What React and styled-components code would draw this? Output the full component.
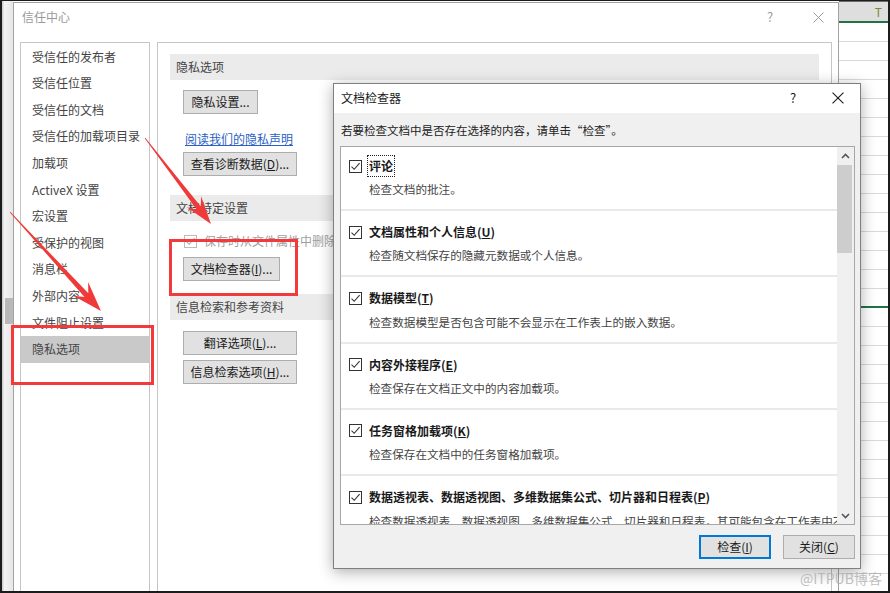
import React from "react"
import styled, { createGlobalStyle, css } from "styled-components"

const GlobalStyle = createGlobalStyle`
  html, body { margin: 0; padding: 0; background: #fff; }
  body { font-family: "Noto Sans CJK SC", "Noto Sans", sans-serif; }
`

const font = css`
  font-family: "Noto Sans CJK SC", "Noto Sans", sans-serif;
`

const Screen = styled.div`
  ${font}
  position: relative;
  width: 890px;
  height: 593px;
  box-sizing: border-box;
  border: 2px solid #1c1c1c;
  border-top-width: 1px;
  overflow: hidden;
  display: flex;
  background: #fff;
  font-size: 12px;
  color: #222;
`

/* ---------- background: spreadsheet edges ---------- */

const LeftStrip = styled.div`
  width: 11px;
  flex-shrink: 0;
  display: flex;
  flex-direction: column;
  background: linear-gradient(to right, #cfcfcf 0, #cfcfcf 1px, #f4f4f4 2px, #e6e6e6 100%);
`

const RowMark = styled.div`
  margin-top: 297px;
  margin-left: 3px;
  height: 26px;
  background: #b9b9b9;
`

const Sheet = styled.div`
  flex: 1;
  display: flex;
  flex-direction: column;
  background: #fff;
`

const Ribbon = styled.div`
  height: 14px;
  background: #f3f3f3;
  border-top: 1px solid #6a6a6a;
  box-sizing: border-box;
`

const ColHeader = styled.div`
  height: 19px;
  background: #dedede;
  border-bottom: 2px solid #217346;
  text-align: right;
  padding-right: 6px;
  line-height: 19px;
  font-size: 12px;
  color: #7a8a2a;
`

const SheetRow = styled.div`
  height: 18px;
  flex-shrink: 0;
  border-bottom: 1px solid ${(p) => (p.$active ? "#217346" : "#dadada")};
  ${(p) => p.$active && "border-bottom-width: 2px; height: 17px;"}
`

/* ---------- outer dialog ---------- */

const OuterDialog = styled.div`
  width: 826px;
  flex-shrink: 0;
  margin-top: 1px;
  box-sizing: border-box;
  border: 1px solid #a3a3a3;
  border-bottom: none;
  background: #fff;
  display: flex;
  flex-direction: column;
`

const TitleBar = styled.div`
  height: ${(p) => p.$h}px;
  flex-shrink: 0;
  display: flex;
  align-items: flex-start;
  padding: 6px 0 0 ${(p) => p.$pl}px;
  box-sizing: border-box;
  line-height: 16px;
  background: #fff;
`

const Title = styled.span`
  font-size: 12px;
  color: ${(p) => (p.$inactive ? "#9a9a9a" : "#1a1a1a")};
  flex: 1;
`

const CtrlBtn = styled.span`
  width: ${(p) => p.$w}px;
  margin-right: ${(p) => p.$mr || 0}px;
  margin-left: ${(p) => p.$ml || 0}px;
  display: flex;
  justify-content: center;
  align-items: center;
  height: 16px;
  font-size: 13px;
  color: ${(p) => (p.$inactive ? "#9a9a9a" : "#1a1a1a")};
`

const OuterBody = styled.div`
  flex: 1;
  display: flex;
  gap: 7px;
  padding: 0 6px;
`

const Nav = styled.div`
  width: 130px;
  flex-shrink: 0;
  box-sizing: border-box;
  border: 1px solid #c6c6c6;
  border-bottom: none;
  padding-top: 0.6px;
`

const NavItem = styled.div`
  height: 26.6px;
  line-height: 26.6px;
  padding-left: 11px;
  font-size: 12px;
  color: #444;
  white-space: nowrap;
  background: ${(p) => (p.$selected ? "#c9c9c9" : "transparent")};
`

const Content = styled.div`
  flex: 1;
  box-sizing: border-box;
  border: 1px solid #c6c6c6;
  border-bottom: none;
  padding: 11px 12px 0 12px;
  display: flex;
  flex-direction: column;
  align-items: flex-start;
`

const SectionHead = styled.div`
  align-self: stretch;
  height: 26px;
  line-height: 26px;
  padding-left: 6px;
  margin-top: ${(p) => p.$mt || 0}px;
  background: #ebebeb;
  color: #444;
  font-size: 12px;
`

const Button = styled.button`
  ${font}
  width: ${(p) => p.$w}px;
  height: 24px;
  margin-top: ${(p) => p.$mt || 0}px;
  margin-left: ${(p) => p.$ml || 0}px;
  padding: 0;
  box-sizing: border-box;
  background: #e1e1e1;
  border: 1px solid ${(p) => (p.$default ? "#0078d7" : "#adadad")};
  box-shadow: ${(p) => (p.$default ? "inset 0 0 0 1px #0078d7" : "none")};
  font-size: 12px;
  color: #1a1a1a;
  line-height: 20px;
  white-space: nowrap;
`

const Link = styled.span`
  margin: 17px 0 0 15px;
  line-height: 16px;
  color: #2b5fc4;
  text-decoration: underline;
  font-size: 12px;
`

const CheckRow = styled.div`
  display: flex;
  align-items: center;
  gap: 7px;
  margin: 12px 0 0 14px;
  line-height: 16px;
  color: ${(p) => (p.$disabled ? "#a0a0a0" : "#222")};
  white-space: nowrap;
`

const Box = styled.span`
  width: 13px;
  height: 13px;
  flex-shrink: 0;
  box-sizing: border-box;
  border: 1px solid ${(p) => (p.$disabled ? "#bcbcbc" : "#333")};
  background: #fff;
  display: flex;
  align-items: center;
  justify-content: center;
`

/* ---------- document inspector dialog ---------- */

const Inspector = styled.div`
  position: absolute;
  left: 331px;
  top: 82px;
  width: 528px;
  height: 486px;
  box-sizing: border-box;
  border: 1px solid #7f7f7f;
  background: #f0f0f0;
  box-shadow: 0 3px 14px rgba(0, 0, 0, 0.32);
  display: flex;
  flex-direction: column;
`

const InspectorBody = styled.div`
  flex: 1;
  display: flex;
  flex-direction: column;
  padding: 0 5px 9px 6px;
`

const Hint = styled.div`
  margin: 9px 0 0 1px;
  line-height: 16px;
  font-size: 11.5px;
  color: #222;
  white-space: nowrap;
`

const ListBox = styled.div`
  margin-top: 8px;
  height: 379px;
  box-sizing: border-box;
  border: 1px solid #a7a7a7;
  background: #fff;
  display: flex;
`

const Items = styled.div`
  flex: 1;
  overflow: hidden;
`

const Item = styled.div`
  height: ${(p) => (p.$first ? 62 : 66.3)}px;
  box-sizing: border-box;
  border-top: ${(p) => (p.$first ? "none" : "2px solid #e9e9e9")};
  padding: ${(p) => (p.$first ? 10 : 12)}px 0 0 8px;
`

const ItemHead = styled.div`
  display: flex;
  align-items: center;
  gap: 7px;
  height: 18px;
`

const ItemTitle = styled.span`
  font-weight: 700;
  font-size: 12px;
  line-height: 18px;
  color: #1a1a1a;
  white-space: nowrap;
  ${(p) =>
    p.$focus &&
    css`
      outline: 1px dotted #222;
      outline-offset: 1px;
    `}
`

const ItemDesc = styled.div`
  margin: 5.4px 0 0 20px;
  line-height: 18px;
  font-size: 11.6px;
  color: #444;
  white-space: nowrap;
`

const ScrollBar = styled.div`
  width: 17px;
  flex-shrink: 0;
  background: #f0f0f0;
  display: flex;
  flex-direction: column;
`

const ScrollArrow = styled.div`
  height: 17px;
  display: flex;
  align-items: center;
  justify-content: center;
  margin-top: ${(p) => (p.$bottom ? "auto" : "0")};
`

const Thumb = styled.div`
  margin: 1px 2px 0 0;
  height: 88px;
  background: #cdcdcd;
`

const Footer = styled.div`
  margin-top: 10px;
  display: flex;
  justify-content: flex-end;
  gap: 12px;
`

/* ---------- annotations ---------- */

const RedBox = styled.div`
  position: absolute;
  box-sizing: border-box;
  border: 3px solid #f23a3a;
`

const Overlay = styled.svg`
  position: absolute;
  left: -2px;
  top: -1px;
  pointer-events: none;
`

const Watermark = styled.div`
  position: absolute;
  left: 798px;
  top: 568px;
  font-size: 14px;
  line-height: 18px;
  color: rgba(170, 170, 170, 0.75);
  white-space: nowrap;
`

const navItems = [
  "受信任的发布者",
  "受信任位置",
  "受信任的文档",
  "受信任的加载项目录",
  "加载项",
  "ActiveX 设置",
  "宏设置",
  "受保护的视图",
  "消息栏",
  "外部内容",
  "文件阻止设置",
  "隐私选项",
]

const checks = [
  { name: "评论", desc: "检查文档的批注。", focus: true },
  { name: "文档属性和个人信息", k: "U", desc: "检查随文档保存的隐藏元数据或个人信息。" },
  { name: "数据模型", k: "T", desc: "检查数据模型是否包含可能不会显示在工作表上的嵌入数据。" },
  { name: "内容外接程序", k: "E", desc: "检查保存在文档正文中的内容加载项。" },
  { name: "任务窗格加载项", k: "K", desc: "检查保存在文档中的任务窗格加载项。" },
  {
    name: "数据透视表、数据透视图、多维数据集公式、切片器和日程表",
    k: "P",
    desc: "检查数据透视表、数据透视图、多维数据集公式、切片器和日程表，其可能包含在工作表中不可见的数据。",
  },
]

const Tick = ({ color = "#333" }) => (
  <svg width="11" height="11" viewBox="0 0 11 11">
    <path d="M1.5 5.6 L4.2 8.3 L9.6 2.2" fill="none" stroke={color} strokeWidth="1.1" />
  </svg>
)

const Cross = ({ size = 11, color = "#1a1a1a" }) => (
  <svg width={size} height={size} viewBox="0 0 11 11">
    <path d="M0.5 0.5 L10.5 10.5 M10.5 0.5 L0.5 10.5" stroke={color} strokeWidth="1" />
  </svg>
)

const Chevron = ({ down }) => (
  <svg width="9" height="6" viewBox="0 0 9 6">
    <path
      d={down ? "M1 1 L4.5 4.5 L8 1" : "M1 5 L4.5 1.5 L8 5"}
      fill="none"
      stroke="#555"
      strokeWidth="1.6"
    />
  </svg>
)

// tapered annotation arrow, computed from start point and tip
const arrowPoints = (x1, y1, x2, y2, headLen, headW) => {
  const dx = x2 - x1
  const dy = y2 - y1
  const len = Math.hypot(dx, dy)
  const ux = dx / len
  const uy = dy / len
  const nx = -uy
  const ny = ux
  const wx = x2 - ux * headLen
  const wy = y2 - uy * headLen
  const jx = x2 - ux * headLen * 0.72
  const jy = y2 - uy * headLen * 0.72
  const pts = [
    [x1 + nx * 0.4, y1 + ny * 0.4],
    [jx + nx * 2.6, jy + ny * 2.6],
    [wx + nx * headW, wy + ny * headW],
    [x2, y2],
    [wx - nx * headW, wy - ny * headW],
    [jx - nx * 2.6, jy - ny * 2.6],
    [x1 - nx * 0.4, y1 - ny * 0.4],
  ]
  return pts.map((p) => p.map((v) => v.toFixed(1)).join(",")).join(" ")
}

const Accel = ({ k }) => (
  <>
    (<u>{k}</u>)
  </>
)

export default function App() {
  return (
    <>
      <GlobalStyle />
      <Screen>
        <LeftStrip>
          <RowMark />
        </LeftStrip>

        <OuterDialog>
          <TitleBar $h={39} $pl={8}>
            <Title $inactive>信任中心</Title>
            <CtrlBtn $w={40} $inactive>?</CtrlBtn>
            <CtrlBtn $w={40} $ml={8}>
              <Cross size={11} color="#9a9a9a" />
            </CtrlBtn>
          </TitleBar>
          <OuterBody>
            <Nav>
              {navItems.map((n, i) => (
                <NavItem key={n} $selected={i === navItems.length - 1}>
                  {n}
                </NavItem>
              ))}
            </Nav>
            <Content>
              <SectionHead>隐私选项</SectionHead>
              <Button $w={75} $mt={10} $ml={13}>
                隐私设置...
              </Button>
              <Link>阅读我们的隐私声明</Link>
              <Button $w={114} $mt={5} $ml={13}>
                查看诊断数据<Accel k="D" />...
              </Button>
              <SectionHead $mt={19}>文档特定设置</SectionHead>
              <CheckRow $disabled>
                <Box $disabled>
                  <Tick color="#aaa" />
                </Box>
                保存时从文件属性中删除个人信息(<u>R</u>)
              </CheckRow>
              <Button $w={97} $mt={8} $ml={13}>
                文档检查器<Accel k="I" />...
              </Button>
              <SectionHead $mt={13}>信息检索和参考资料</SectionHead>
              <Button $w={114} $mt={11} $ml={13}>
                翻译选项<Accel k="L" />...
              </Button>
              <Button $w={114} $mt={5} $ml={13}>
                信息检索选项<Accel k="H" />...
              </Button>
            </Content>
          </OuterBody>
        </OuterDialog>

        <Sheet>
          <Ribbon />
          <ColHeader>T</ColHeader>
          {Array.from({ length: 30 }, (_, i) => (
            <SheetRow key={i} $active={i === 14} />
          ))}
        </Sheet>

        <Inspector>
          <TitleBar $h={29} $pl={7}>
            <Title>文档检查器</Title>
            <CtrlBtn $w={36}>?</CtrlBtn>
            <CtrlBtn $w={40} $mr={2} $ml={7}>
              <Cross size={12} />
            </CtrlBtn>
          </TitleBar>
          <InspectorBody>
            <Hint>若要检查文档中是否存在选择的内容，请单击“检查”。</Hint>
            <ListBox>
              <Items>
                {checks.map((c, i) => (
                  <Item key={c.name} $first={i === 0}>
                    <ItemHead>
                      <Box>
                        <Tick />
                      </Box>
                      <ItemTitle $focus={c.focus}>
                        {c.name}
                        {c.k && <Accel k={c.k} />}
                      </ItemTitle>
                    </ItemHead>
                    <ItemDesc>{c.desc}</ItemDesc>
                  </Item>
                ))}
              </Items>
              <ScrollBar>
                <ScrollArrow>
                  <Chevron />
                </ScrollArrow>
                <Thumb />
                <ScrollArrow $bottom>
                  <Chevron down />
                </ScrollArrow>
              </ScrollBar>
            </ListBox>
            <Footer>
              <Button $w={72} $default>
                检查<Accel k="I" />
              </Button>
              <Button $w={72}>
                关闭<Accel k="C" />
              </Button>
            </Footer>
          </InspectorBody>
        </Inspector>

        <RedBox style={{ left: 9, top: 324, width: 143, height: 60 }} />
        <RedBox style={{ left: 167, top: 238, width: 129, height: 57 }} />

        <Overlay width="890" height="593" viewBox="0 0 890 593">
          <polygon points={arrowPoints(145, 138, 211, 224, 28, 9)} fill="#f03a3a" />
          <polygon points={arrowPoints(10, 212, 101, 311, 30, 10)} fill="#f03a3a" />
        </Overlay>

        <Watermark>@ITPUB博客</Watermark>
      </Screen>
    </>
  )
}
